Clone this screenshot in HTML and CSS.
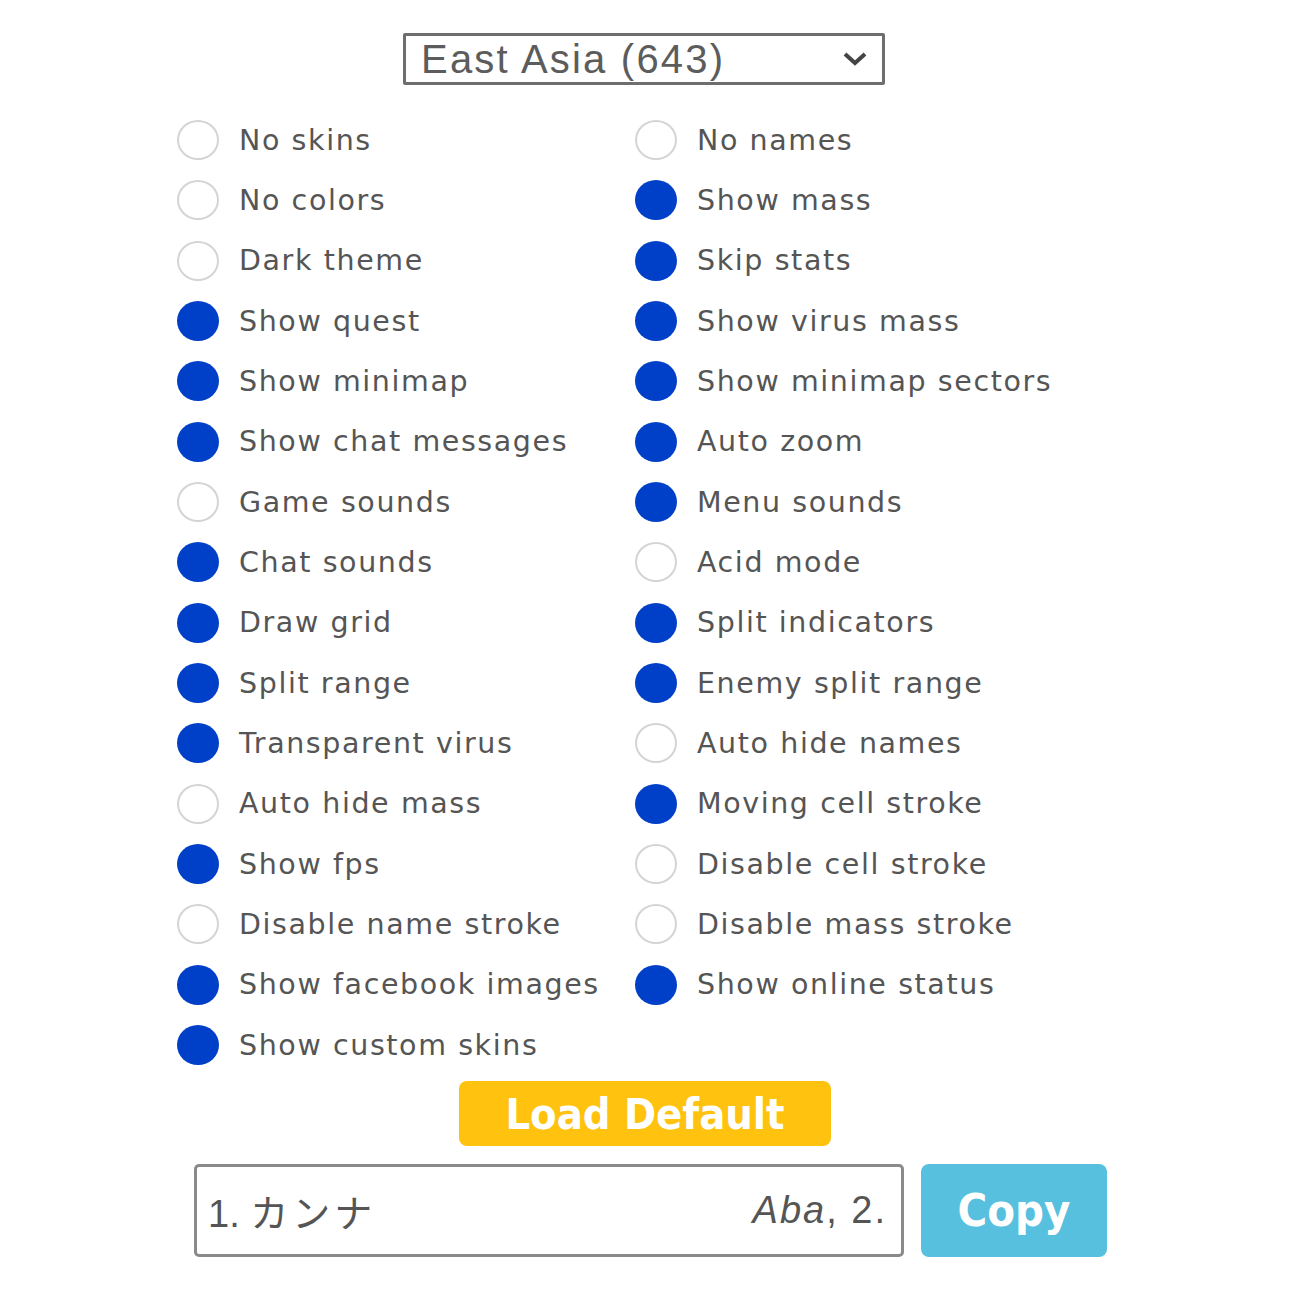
FILE: index.html
```html
<!DOCTYPE html>
<html>
<head>
<meta charset="utf-8">
<link rel="stylesheet" href="styles.css">
</head>
<body>
<div class="page">
  <div class="select-row">
    <div class="select">
      <span class="select-text">East Asia (643)</span>
      <svg class="chev" width="30" height="20" viewBox="0 0 30 20"><path d="M5 5 L15 14 L25 5" fill="none" stroke="#444" stroke-width="4"/></svg>
    </div>
  </div>
  <div class="grid">
    <label class="opt"><span class="radio"></span><span class="lbl">No skins</span></label>
    <label class="opt"><span class="radio"></span><span class="lbl">No names</span></label>
    <label class="opt"><span class="radio"></span><span class="lbl">No colors</span></label>
    <label class="opt"><span class="radio on"></span><span class="lbl">Show mass</span></label>
    <label class="opt"><span class="radio"></span><span class="lbl">Dark theme</span></label>
    <label class="opt"><span class="radio on"></span><span class="lbl">Skip stats</span></label>
    <label class="opt"><span class="radio on"></span><span class="lbl">Show quest</span></label>
    <label class="opt"><span class="radio on"></span><span class="lbl">Show virus mass</span></label>
    <label class="opt"><span class="radio on"></span><span class="lbl">Show minimap</span></label>
    <label class="opt"><span class="radio on"></span><span class="lbl">Show minimap sectors</span></label>
    <label class="opt"><span class="radio on"></span><span class="lbl">Show chat messages</span></label>
    <label class="opt"><span class="radio on"></span><span class="lbl">Auto zoom</span></label>
    <label class="opt"><span class="radio"></span><span class="lbl">Game sounds</span></label>
    <label class="opt"><span class="radio on"></span><span class="lbl">Menu sounds</span></label>
    <label class="opt"><span class="radio on"></span><span class="lbl">Chat sounds</span></label>
    <label class="opt"><span class="radio"></span><span class="lbl">Acid mode</span></label>
    <label class="opt"><span class="radio on"></span><span class="lbl">Draw grid</span></label>
    <label class="opt"><span class="radio on"></span><span class="lbl">Split indicators</span></label>
    <label class="opt"><span class="radio on"></span><span class="lbl">Split range</span></label>
    <label class="opt"><span class="radio on"></span><span class="lbl">Enemy split range</span></label>
    <label class="opt"><span class="radio on"></span><span class="lbl">Transparent virus</span></label>
    <label class="opt"><span class="radio"></span><span class="lbl">Auto hide names</span></label>
    <label class="opt"><span class="radio"></span><span class="lbl">Auto hide mass</span></label>
    <label class="opt"><span class="radio on"></span><span class="lbl">Moving cell stroke</span></label>
    <label class="opt"><span class="radio on"></span><span class="lbl">Show fps</span></label>
    <label class="opt"><span class="radio"></span><span class="lbl">Disable cell stroke</span></label>
    <label class="opt"><span class="radio"></span><span class="lbl">Disable name stroke</span></label>
    <label class="opt"><span class="radio"></span><span class="lbl">Disable mass stroke</span></label>
    <label class="opt"><span class="radio on"></span><span class="lbl">Show facebook images</span></label>
    <label class="opt"><span class="radio on"></span><span class="lbl">Show online status</span></label>
    <label class="opt"><span class="radio on"></span><span class="lbl">Show custom skins</span></label>
  </div>
  <div class="btn-row">
    <div class="btn-default">Load Default</div>
  </div>
  <div class="copy-row">
    <div class="input">
      <span class="in-left">1. <span class="kana">カンナ</span></span>
      <span class="in-right"><i>Aba</i>, 2.</span>
    </div>
    <div class="btn-copy">Copy</div>
  </div>
</div>
</body>
</html>
```

FILE: styles.css
```css
html, body {
  margin: 0;
  padding: 0;
  background: #ffffff;
}
.page {
  width: 1300px;
  padding-top: 33px;
  box-sizing: border-box;
}
.select-row {
  display: flex;
  padding-left: 403px;
}
.select {
  width: 482px;
  height: 52px;
  box-sizing: border-box;
  border: 3px solid #6e6e6e;
  border-radius: 2px;
  display: flex;
  align-items: center;
  justify-content: space-between;
  padding: 0 12px 0 15px;
}
.select-text {
  font-family: "Liberation Sans", Arial, sans-serif;
  font-size: 40px;
  letter-spacing: 2.2px;
  color: #5c5c5c;
  line-height: 1;
}
.chev {
  display: block;
}
.grid {
  margin-top: 25px;
  padding-left: 177px;
  display: grid;
  grid-template-columns: 458px 458px;
  grid-auto-rows: 60.33px;
}
.opt {
  display: flex;
  align-items: center;
  gap: 20px;
}
.radio {
  width: 42px;
  height: 40px;
  box-sizing: border-box;
  border-radius: 50%;
  border: 2px solid #d4d4d4;
  background: #ffffff;
  flex: none;
}
.radio.on {
  border: none;
  background: #0040c8;
}
.lbl {
  font-family: "DejaVu Sans", Verdana, sans-serif;
  font-size: 28.5px;
  letter-spacing: 1.6px;
  color: #555555;
  white-space: nowrap;
}
.btn-row {
  margin-top: 6px;
  padding-left: 459px;
  display: flex;
}
.btn-default {
  width: 372px;
  height: 65px;
  background: #ffc20e;
  border-radius: 8px;
  color: #ffffff;
  font-family: "DejaVu Sans Condensed", "DejaVu Sans", sans-serif;
  font-weight: bold;
  font-size: 43px;
  display: flex;
  align-items: center;
  justify-content: center;
}
.copy-row {
  margin-top: 18px;
  padding-left: 194px;
  display: flex;
  gap: 17px;
}
.input {
  width: 710px;
  height: 93px;
  box-sizing: border-box;
  border: 3px solid #8a8a8a;
  border-radius: 5px;
  display: flex;
  align-items: center;
  justify-content: space-between;
  padding: 0 14px 0 11px;
  font-family: "Liberation Sans", Arial, "Noto Sans CJK JP", sans-serif;
  font-size: 38px;
  color: #555555;
}
.kana {
  letter-spacing: 4px;
}
.in-right {
  letter-spacing: 2px;
}
.in-right i {
  font-style: italic;
}
.btn-copy {
  width: 186px;
  height: 93px;
  background: #58c0df;
  border-radius: 8px;
  color: #ffffff;
  font-family: "DejaVu Sans Condensed", "DejaVu Sans", sans-serif;
  font-weight: bold;
  font-size: 45px;
  display: flex;
  align-items: center;
  justify-content: center;
}
```
